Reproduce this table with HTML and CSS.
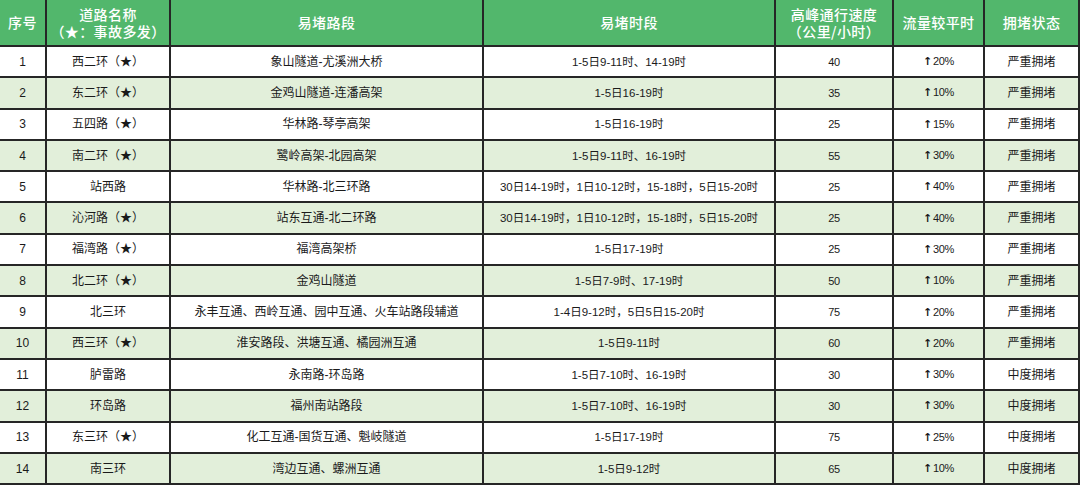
FILE: index.html
```html
<!DOCTYPE html>
<html lang="zh">
<head>
<meta charset="utf-8">
<link rel="stylesheet" href="styles.css">
</head>
<body>
<table class="grid">
  <colgroup>
    <col class="c-no"><col class="c-road"><col class="c-seg"><col class="c-time"><col class="c-speed"><col class="c-flow"><col class="c-state">
  </colgroup>
  <thead>
    <tr>
      <th>序号</th>
      <th><span class="ln">道路名称</span><span class="ln">（★：事故多发）</span></th>
      <th>易堵路段</th>
      <th>易堵时段</th>
      <th><span class="ln">高峰通行速度</span><span class="ln">（公里/小时）</span></th>
      <th>流量较平时</th>
      <th>拥堵状态</th>
    </tr>
  </thead>
  <tbody>
    <tr><td>1</td><td>西二环（★）</td><td>象山隧道-尤溪洲大桥</td><td class="time">1-5日9-11时、14-19时</td><td class="num">40</td><td class="num"><span class="up">↑</span>20%</td><td>严重拥堵</td></tr>
    <tr><td>2</td><td>东二环（★）</td><td>金鸡山隧道-连潘高架</td><td class="time">1-5日16-19时</td><td class="num">35</td><td class="num"><span class="up">↑</span>10%</td><td>严重拥堵</td></tr>
    <tr><td>3</td><td>五四路（★）</td><td>华林路-琴亭高架</td><td class="time">1-5日16-19时</td><td class="num">25</td><td class="num"><span class="up">↑</span>15%</td><td>严重拥堵</td></tr>
    <tr><td>4</td><td>南二环（★）</td><td>鹭岭高架-北园高架</td><td class="time">1-5日9-11时、16-19时</td><td class="num">55</td><td class="num"><span class="up">↑</span>30%</td><td>严重拥堵</td></tr>
    <tr><td>5</td><td>站西路</td><td>华林路-北三环路</td><td class="time">30日14-19时，1日10-12时，15-18时，5日15-20时</td><td class="num">25</td><td class="num"><span class="up">↑</span>40%</td><td>严重拥堵</td></tr>
    <tr><td>6</td><td>沁河路（★）</td><td>站东互通-北二环路</td><td class="time">30日14-19时，1日10-12时，15-18时，5日15-20时</td><td class="num">25</td><td class="num"><span class="up">↑</span>40%</td><td>严重拥堵</td></tr>
    <tr><td>7</td><td>福湾路（★）</td><td>福湾高架桥</td><td class="time">1-5日17-19时</td><td class="num">25</td><td class="num"><span class="up">↑</span>30%</td><td>严重拥堵</td></tr>
    <tr><td>8</td><td>北二环（★）</td><td>金鸡山隧道</td><td class="time">1-5日7-9时、17-19时</td><td class="num">50</td><td class="num"><span class="up">↑</span>10%</td><td>严重拥堵</td></tr>
    <tr><td>9</td><td>北三环</td><td>永丰互通、西岭互通、园中互通、火车站路段辅道</td><td class="time">1-4日9-12时，5日5日15-20时</td><td class="num">75</td><td class="num"><span class="up">↑</span>20%</td><td>严重拥堵</td></tr>
    <tr><td>10</td><td>西三环（★）</td><td>淮安路段、洪塘互通、橘园洲互通</td><td class="time">1-5日9-11时</td><td class="num">60</td><td class="num"><span class="up">↑</span>20%</td><td>严重拥堵</td></tr>
    <tr><td>11</td><td>胪雷路</td><td>永南路-环岛路</td><td class="time">1-5日7-10时、16-19时</td><td class="num">30</td><td class="num"><span class="up">↑</span>30%</td><td>中度拥堵</td></tr>
    <tr><td>12</td><td>环岛路</td><td>福州南站路段</td><td class="time">1-5日7-10时、16-19时</td><td class="num">30</td><td class="num"><span class="up">↑</span>30%</td><td>中度拥堵</td></tr>
    <tr><td>13</td><td>东三环（★）</td><td>化工互通-国货互通、魁岐隧道</td><td class="time">1-5日17-19时</td><td class="num">75</td><td class="num"><span class="up">↑</span>25%</td><td>中度拥堵</td></tr>
    <tr><td>14</td><td>南三环</td><td>湾边互通、螺洲互通</td><td class="time">1-5日9-12时</td><td class="num">65</td><td class="num"><span class="up">↑</span>10%</td><td>中度拥堵</td></tr>
  </tbody>
</table>
</body>
</html>
```

FILE: styles.css
```css
html, body {
  margin: 0;
  padding: 0;
}

body {
  width: 1080px;
  height: 485px;
  overflow: hidden;
  background: #9a9a9a;
}

.grid {
  border-collapse: collapse;
  table-layout: fixed;
  width: 1079px;
  font-family: "Liberation Sans", "Noto Sans CJK SC", sans-serif;
  color: #1a1a1a;
  background: #ffffff;
}

.c-no { width: 46px; }
.c-road { width: 124px; }
.c-seg { width: 313px; }
.c-time { width: 292px; }
.c-speed { width: 118px; }
.c-flow { width: 91px; }
.c-state { width: 95px; }

.grid th,
.grid td {
  border: 2px solid #262626;
  text-align: center;
  vertical-align: middle;
  padding: 0;
  overflow: hidden;
  white-space: nowrap;
}

.grid th {
  background: #52b76c;
  color: #ffffff;
  font-family: "Noto Sans CJK SC", sans-serif;
  font-size: 14px;
  font-weight: 500;
  line-height: 17px;
  letter-spacing: 0.4px;
  height: 45px;
  border-top: 0;
}

.ln {
  display: block;
  height: 17px;
  line-height: 17px;
}

.grid th:first-child,
.grid td:first-child {
  border-left: 0;
}

.grid td {
  font-size: 12px;
  line-height: 14px;
  height: 29.3px;
}

.grid tbody tr:nth-child(even) td {
  background: #e2efda;
}

.grid td.time {
  font-size: 11.5px;
}

.grid td.num {
  font-size: 11px;
  letter-spacing: -0.3px;
}

.up {
  font-family: "DejaVu Sans", sans-serif;
  font-weight: bold;
  font-size: 11px;
  margin-right: 1px;
}
```
